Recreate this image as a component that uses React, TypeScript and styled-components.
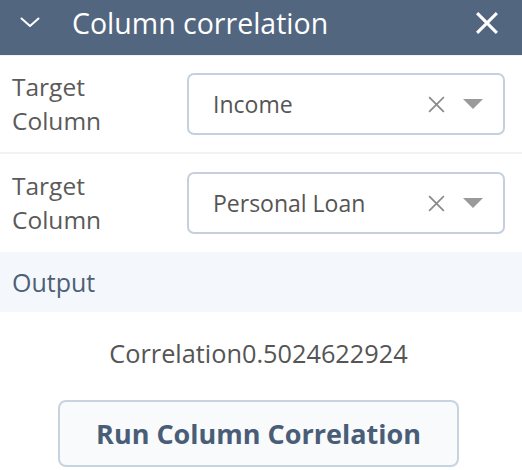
import React from "react";
import styled, { createGlobalStyle } from "styled-components";

const Global = createGlobalStyle`
  html, body { margin: 0; padding: 0; background: #ffffff; }
  body { font-family: "Open Sans", "Noto Sans", sans-serif; }
  * { box-sizing: border-box; }
`;

const Panel = styled.div`
  width: 522px;
  display: flex;
  flex-direction: column;
  background: #ffffff;
`;

const Header = styled.div`
  height: 56px;
  background: #52667f;
  border-bottom: 1px solid #f2f3f5;
  display: flex;
  align-items: center;
  padding: 0 24px 10px 20px;
  color: #ffffff;
`;

const Title = styled.div`
  flex: 1;
  margin-left: 32px;
  font-size: 28.5px;
  line-height: 34px;
`;

const IconBtn = styled.span`
  display: flex;
  align-items: center;
  justify-content: center;
`;

const Row = styled.div<{ $last?: boolean }>`
  display: flex;
  align-items: center;
  height: 98px;
  padding: 0 17px 0 12px;
  border-bottom: ${(p) => (p.$last ? "none" : "2px solid #f2f3f4")};
`;

const Label = styled.div`
  width: 175px;
  font-size: 24.5px;
  line-height: 34px;
  color: #5a5a5a;
`;

const Select = styled.div`
  flex: 1;
  height: 62px;
  border: 2px solid #c6d0dd;
  border-radius: 7px;
  display: flex;
  align-items: center;
  padding: 0 20px 0 24px;
`;

const Value = styled.div`
  flex: 1;
  font-size: 23px;
  color: #555555;
`;

const Controls = styled.div`
  display: flex;
  align-items: center;
  gap: 18px;
`;

const SectionBand = styled.div`
  height: 60px;
  background: #f4f8fd;
  display: flex;
  align-items: center;
  padding-left: 12px;
  font-size: 25px;
  color: #4f5f75;
`;

const Result = styled.div`
  text-align: center;
  font-size: 25.3px;
  line-height: 34px;
  color: #555555;
  padding: 24px 5px 0 0;
  height: 88px;
`;

const ButtonWrap = styled.div`
  display: flex;
  justify-content: center;
  padding-right: 5px;
`;

const RunButton = styled.button`
  width: 401px;
  height: 67px;
  border: 2px solid #c8d3e0;
  border-radius: 8px;
  background: #f8fafc;
  font-family: "Open Sans", "Noto Sans", sans-serif;
  font-weight: 700;
  font-size: 27px;
  color: #4a5d77;
`;

const Chevron = () => (
  <svg width="20" height="11" viewBox="0 0 20 11">
    <path d="M1.5 1.5 L10 9 L18.5 1.5" fill="none" stroke="#fff" strokeWidth="2" strokeLinecap="round" strokeLinejoin="round" />
  </svg>
);

const CloseIcon = ({ size, color, w }: { size: number; color: string; w: number }) => (
  <svg width={size} height={size} viewBox="0 0 20 20">
    <path d="M2 2 L18 18 M18 2 L2 18" fill="none" stroke={color} strokeWidth={w} strokeLinecap="square" />
  </svg>
);

const Caret = () => (
  <svg width="20" height="10" viewBox="0 0 20 10">
    <path d="M0 0 L20 0 L10 10 Z" fill="#9a9a9a" />
  </svg>
);

const SelectRow = ({ value, last }: { value: string; last?: boolean }) => (
  <Row $last={last}>
    <Label>
      Target
      <br />
      Column
    </Label>
    <Select>
      <Value>{value}</Value>
      <Controls>
        <CloseIcon size={17} color="#8a8a8a" w={2} />
        <Caret />
      </Controls>
    </Select>
  </Row>
);

export default function App() {
  return (
    <>
      <Global />
      <Panel>
        <Header>
          <IconBtn>
            <Chevron />
          </IconBtn>
          <Title>Column correlation</Title>
          <IconBtn>
            <CloseIcon size={22} color="#fff" w={2.8} />
          </IconBtn>
        </Header>
        <SelectRow value="Income" />
        <SelectRow value="Personal Loan" last />
        <SectionBand>Output</SectionBand>
        <Result>Correlation0.5024622924</Result>
        <ButtonWrap>
          <RunButton>Run Column Correlation</RunButton>
        </ButtonWrap>
      </Panel>
    </>
  );
}
